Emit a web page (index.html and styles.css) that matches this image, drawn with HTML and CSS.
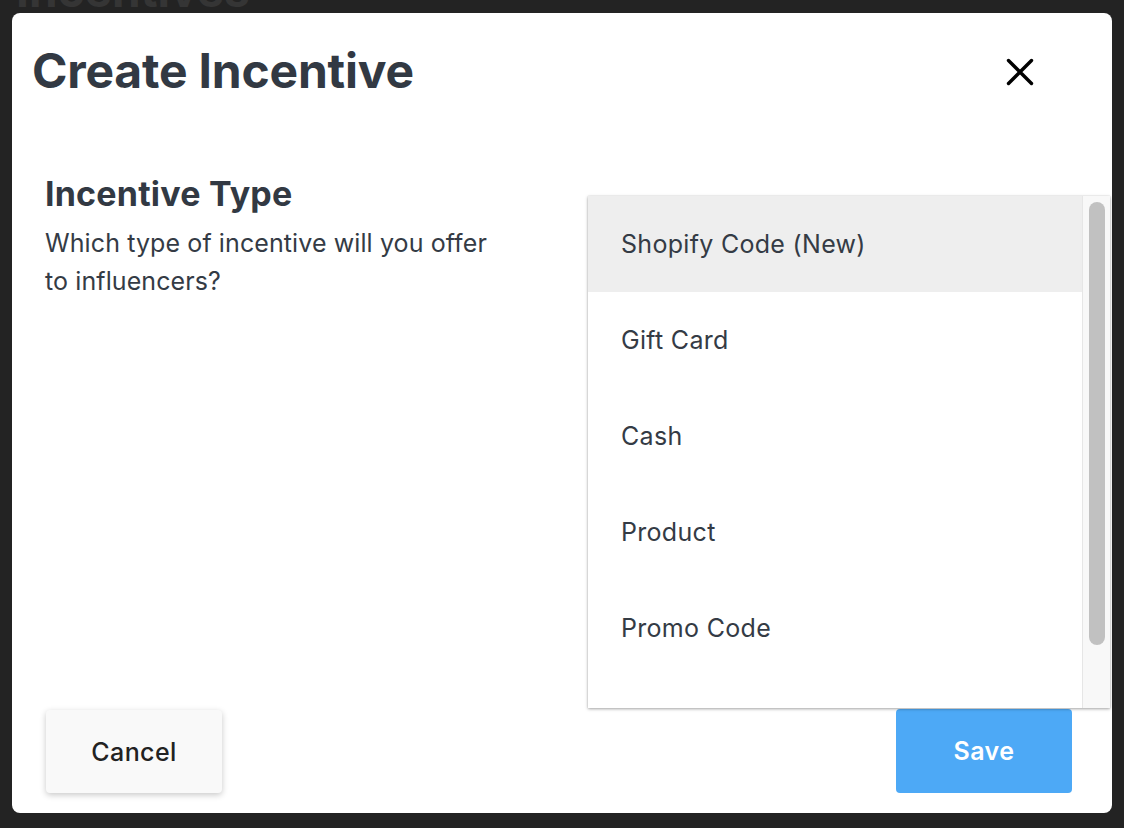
FILE: index.html
```html
<!DOCTYPE html>
<html>
<head>
<meta charset="utf-8">
<link rel="stylesheet" href="styles.css">
</head>
<body>
<div class="page">
  <h1 class="page-title">Incentives</h1>
</div>
<div class="overlay">
  <div class="modal">
    <div class="modal-header">
      <h2 class="modal-title">Create Incentive</h2>
      <button class="close-btn" aria-label="Close">
        <svg width="28" height="28" viewBox="0 0 28 28"><path d="M2.5 2.5 L25.5 25.5 M25.5 2.5 L2.5 25.5" stroke="#000" stroke-width="3.4" stroke-linecap="round"/></svg>
      </button>
    </div>
    <div class="modal-body">
      <div class="field-info">
        <h3 class="field-title">Incentive Type</h3>
        <p class="field-desc">Which type of incentive will you offer to influencers?</p>
      </div>
      <div class="field-control"></div>
    </div>
    <div class="modal-footer">
      <button class="btn btn-cancel">Cancel</button>
      <button class="btn btn-save">Save</button>
    </div>
    <div class="menu">
      <ul class="menu-list">
        <li class="menu-item selected">Shopify Code (New)</li>
        <li class="menu-item">Gift Card</li>
        <li class="menu-item">Cash</li>
        <li class="menu-item">Product</li>
        <li class="menu-item">Promo Code</li>
      </ul>
      <div class="scrollbar"><div class="thumb"></div></div>
    </div>
  </div>
</div>
</body>
</html>
```
FILE: styles.css
```css
* { box-sizing: border-box; }
html, body {
  margin: 0;
  padding: 0;
  width: 1124px;
  height: 828px;
  overflow: hidden;
  background: #232323;
  font-family: Inter, "Noto Sans", sans-serif;
}
.page {
  padding: 0 0 0 16px;
}
.page-title {
  margin: -34px 0 0;
  font-size: 46px;
  font-weight: 700;
  color: #353535;
  line-height: 48px;
}
.overlay {
  position: absolute;
  inset: 0;
}
.modal {
  position: absolute;
  left: 12px;
  top: 13px;
  width: 1100px;
  height: 800px;
  background: #fff;
  border-radius: 8px;
  display: flex;
  flex-direction: column;
}
.modal-header {
  display: flex;
  justify-content: space-between;
  align-items: flex-start;
  padding: 28px 78px 0 20px;
  height: 120px;
}
.modal-title {
  margin: 0;
  font-size: 48px;
  font-weight: 700;
  color: #323943;
  line-height: 60px;
  letter-spacing: -0.2px;
}
.close-btn {
  background: none;
  border: 0;
  padding: 0;
  margin-top: 17px;
  width: 28px;
  height: 28px;
  cursor: pointer;
}
.close-btn svg { display: block; }
.modal-body {
  flex: 1;
  display: flex;
  padding: 40px 0 0 33px;
}
.field-info {
  width: 470px;
}
.field-title {
  margin: 0 0 8px;
  font-size: 34px;
  font-weight: 700;
  color: #323943;
  line-height: 42px;
  letter-spacing: 0.2px;
}
.field-desc {
  margin: 0;
  padding-top: 1px;
  font-size: 25px;
  line-height: 38px;
  color: #343b45;
  letter-spacing: 0.1px;
}
.field-control { flex: 1; }
.modal-footer {
  display: flex;
  justify-content: space-between;
  align-items: flex-end;
  padding: 0 40px 20px 34px;
}
.btn {
  width: 176px;
  height: 84px;
  border: 0;
  border-radius: 4px;
  font-family: Inter, "Noto Sans", sans-serif;
  font-size: 25px;
  font-weight: 600;
  letter-spacing: 0.4px;
  cursor: pointer;
}
.btn-cancel {
  height: 83px;
  background: #f9f9f9;
  color: #222;
  font-weight: 500;
  box-shadow: 0 2px 6px rgba(0, 0, 0, 0.22);
}
.btn-save {
  background: #4da9f6;
  color: #fff;
}
.menu {
  position: absolute;
  left: 576px;
  top: 183px;
  width: 522px;
  height: 512px;
  background: #fff;
  display: flex;
  overflow: hidden;
  box-shadow: 0 1px 3px rgba(0, 0, 0, 0.35), 0 0 1px rgba(0, 0, 0, 0.15);
}
.menu-list {
  list-style: none;
  margin: 0;
  padding: 0;
  flex: 1;
}
.menu-item {
  height: 96px;
  display: flex;
  align-items: center;
  padding-left: 33px;
  font-size: 25px;
  letter-spacing: 0.3px;
  color: #343b45;
}
.menu-item.selected { background: #eeeeee; }
.scrollbar {
  width: 28px;
  background: #f8f8f8;
  border-left: 1px solid #e6e6e6;
  padding: 6px 5px 0 6px;
}
.thumb {
  height: 443px;
  background: #c1c1c1;
  border-radius: 8px;
}
```
